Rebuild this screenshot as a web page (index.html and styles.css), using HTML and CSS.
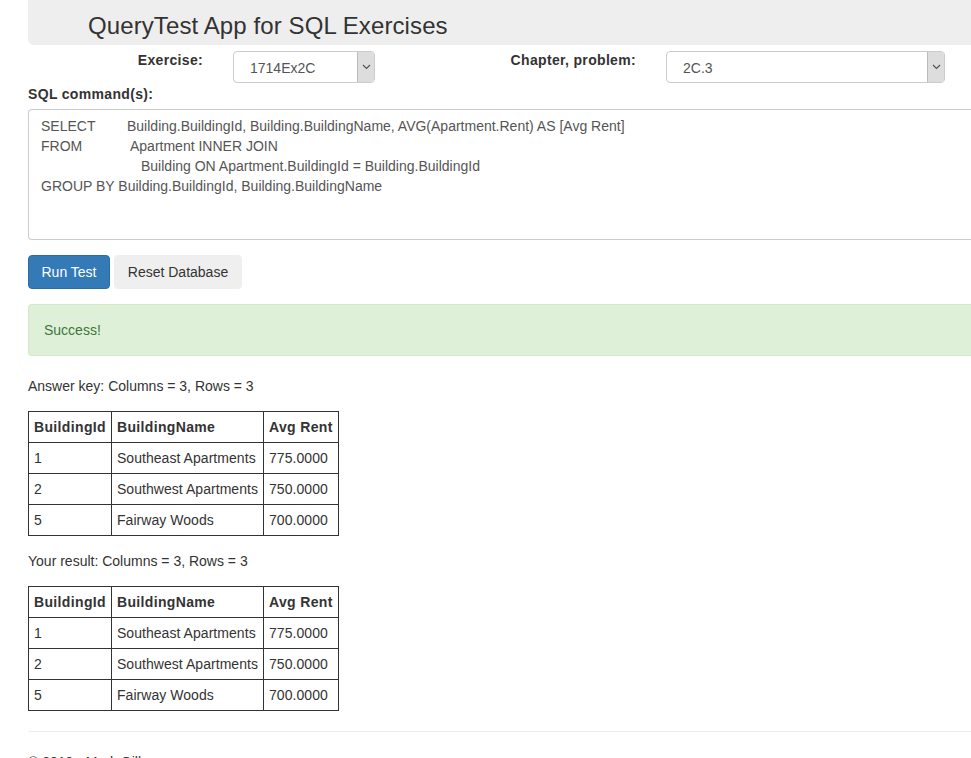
FILE: index.html
```html
<!DOCTYPE html>
<html>
<head>
<meta charset="utf-8">
<title>QueryTest App for SQL Exercises</title>
<link rel="stylesheet" href="styles.css">
</head>
<body>
<div class="container">
  <div class="jumbo"><h1 class="title">QueryTest App for SQL Exercises</h1></div>

  <div class="pick-row">
    <label class="lbl lbl-ex">Exercise:</label>
    <div class="select sel-ex"><span class="sel-val">1714Ex2C</span><span class="sel-btn"><svg width="9" height="6" viewBox="0 0 9 6"><path d="M1 1 L4.5 4.5 L8 1" fill="none" stroke="#555" stroke-width="1.2"/></svg></span></div>
    <label class="lbl lbl-ch">Chapter, problem:</label>
    <div class="select sel-ch"><span class="sel-val">2C.3</span><span class="sel-btn"><svg width="9" height="6" viewBox="0 0 9 6"><path d="M1 1 L4.5 4.5 L8 1" fill="none" stroke="#555" stroke-width="1.2"/></svg></span></div>
  </div>

  <div class="sql-label">SQL command(s):</div>
  <div class="sql-box">
    <div class="sql-line"><span class="kw kw-select">SELECT</span>Building.BuildingId, Building.BuildingName, AVG(Apartment.Rent) AS [Avg Rent]</div>
    <div class="sql-line"><span class="kw kw-from">FROM</span>Apartment INNER JOIN</div>
    <div class="sql-line indent">Building ON Apartment.BuildingId = Building.BuildingId</div>
    <div class="sql-line">GROUP BY Building.BuildingId, Building.BuildingName</div>
  </div>

  <div class="btn-row">
    <button class="btn btn-primary">Run Test</button>
    <button class="btn btn-default">Reset Database</button>
  </div>

  <div class="alert">Success!</div>

  <p class="summary">Answer key: Columns = 3, Rows = 3</p>
  <table class="result">
    <tr><th>BuildingId</th><th>BuildingName</th><th>Avg Rent</th></tr>
    <tr><td>1</td><td>Southeast Apartments</td><td>775.0000</td></tr>
    <tr><td>2</td><td>Southwest Apartments</td><td>750.0000</td></tr>
    <tr><td>5</td><td>Fairway Woods</td><td>700.0000</td></tr>
  </table>

  <p class="summary">Your result: Columns = 3, Rows = 3</p>
  <table class="result">
    <tr><th>BuildingId</th><th>BuildingName</th><th>Avg Rent</th></tr>
    <tr><td>1</td><td>Southeast Apartments</td><td>775.0000</td></tr>
    <tr><td>2</td><td>Southwest Apartments</td><td>750.0000</td></tr>
    <tr><td>5</td><td>Fairway Woods</td><td>700.0000</td></tr>
  </table>

  <hr class="rule">
  <footer class="footer">© 2019 - Mark Gillenson</footer>
</div>
</body>
</html>
```
FILE: styles.css
```css
html, body {
  margin: 0;
  padding: 0;
  overflow: hidden;
}
body {
  font-family: "Liberation Sans", Arial, sans-serif;
  font-size: 14px;
  line-height: 20px;
  color: #333;
  background: #fff;
}
.container {
  padding-left: 28px;
  width: 1000px;
}
.jumbo {
  background: #eee;
  height: 45px;
  border-radius: 0 0 6px 6px;
  padding-left: 60px;
  box-sizing: border-box;
}
.title {
  margin: 0;
  font-weight: normal;
  font-size: 24px;
  line-height: 26px;
  padding-top: 13px;
  letter-spacing: 0.1px;
  color: #333;
}
.pick-row {
  display: flex;
  align-items: flex-start;
  margin-top: 6px;
  height: 33px;
}
.lbl {
  font-weight: bold;
  text-align: right;
  margin-top: -1px;
  letter-spacing: 0.33px;
}
.lbl-ex { width: 175px; margin-right: 30px; }
.lbl-ch { width: 261px; margin-right: 30px; }
.select {
  display: flex;
  height: 32px;
  box-sizing: border-box;
  border: 1px solid #ccc;
  border-radius: 4px;
  color: #555;
  overflow: hidden;
}
.sel-ex { width: 142px; }
.sel-ch { width: 279px; }
.sel-val {
  flex: 1;
  padding: 6px 0 0 16px;
  line-height: 20px;
}
.sel-btn {
  width: 16px;
  background: #ddd;
  border-left: 1px solid #bbb;
  display: flex;
  align-items: center;
  justify-content: center;
}
.sql-label {
  font-weight: bold;
  letter-spacing: 0.33px;
}
.sql-box {
  margin-top: 5px;
  height: 131px;
  box-sizing: border-box;
  border: 1px solid #ccc;
  border-right: none;
  border-radius: 4px 0 0 4px;
  padding: 6px 12px;
  color: #555;
}
.sql-line { white-space: nowrap; }
.kw { display: inline-block; }
.kw-select { width: 86px; }
.kw-from { width: 89px; }
.indent { padding-left: 100px; }
.btn-row {
  margin-top: 15px;
  display: flex;
  gap: 4px;
}
.btn {
  font-family: inherit;
  font-size: 14px;
  line-height: 20px;
  padding: 6px 12px;
  border-radius: 4px;
  height: 34px;
  box-sizing: border-box;
}
.btn-primary {
  background: #337ab7;
  border: 1px solid #2e6da4;
  color: #fff;
  width: 82px;
}
.btn-default {
  background: #efefef;
  border: 1px solid #efefef;
  color: #333;
  width: 128px;
}
.alert {
  margin-top: 15px;
  margin-bottom: 20px;
  padding: 15px;
  background: #dff0d8;
  border: 1px solid #d6e9c6;
  border-right: none;
  border-radius: 4px 0 0 4px;
  color: #3c763d;
}
.summary {
  margin: 0 0 15px;
}
.result {
  border-collapse: collapse;
  margin-bottom: 15px;
}
.result th, .result td {
  border: 1px solid #333;
  padding: 5px 5px;
  text-align: left;
  line-height: 20px;
}
.result th {
  font-weight: bold;
  letter-spacing: 0.35px;
}
.result td {
  letter-spacing: 0.05px;
}
.rule {
  margin: 20px 0 0;
  border: 0;
  border-top: 1px solid #eee;
}
.footer {
  margin-top: 20px;
}
```
